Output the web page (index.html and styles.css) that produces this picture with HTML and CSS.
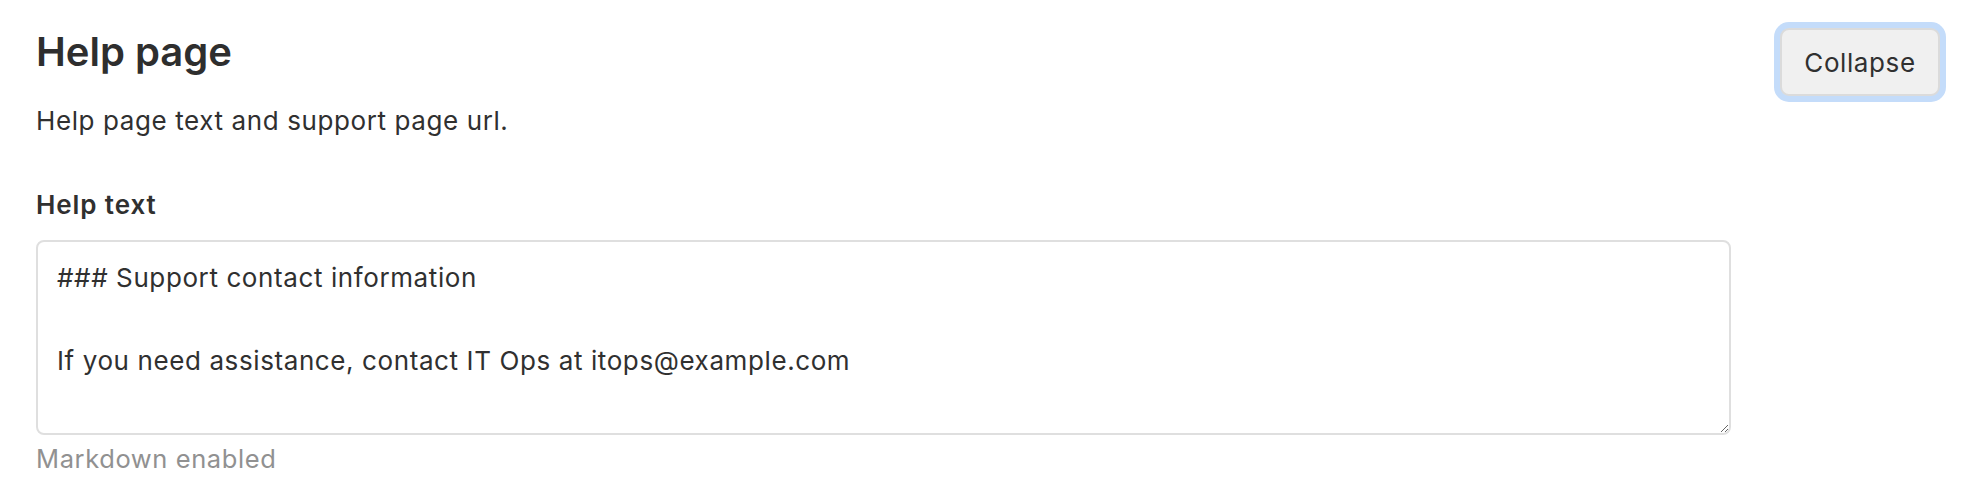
FILE: index.html
```html
<!DOCTYPE html>
<html>
<head>
<meta charset="utf-8">
<link rel="stylesheet" href="styles.css">
</head>
<body>
<section class="settings">
  <div class="settings-header">
    <div class="header-text">
      <h4 class="settings-title">Help page</h4>
      <p class="settings-desc">Help page text and support page url.</p>
    </div>
    <button class="btn-collapse" type="button">Collapse</button>
  </div>
  <div class="settings-content">
    <label class="field-label" for="help-text">Help text</label>
    <textarea id="help-text" class="field-textarea">### Support contact information

If you need assistance, contact IT Ops at itops@example.com</textarea>
    <div class="field-hint">Markdown enabled</div>
  </div>
</section>
</body>
</html>
```
FILE: styles.css
```css
html, body {
  margin: 0;
  padding: 0;
  background: #ffffff;
}
body {
  font-family: Inter, "Noto Sans", "Liberation Sans", sans-serif;
  color: #303030;
}
.settings {
  padding: 28px 16px 0 36px;
}
.settings-header {
  display: flex;
  justify-content: space-between;
  align-items: flex-start;
}
.settings-title {
  margin: 0;
  font-size: 40px;
  line-height: 48px;
  font-weight: 600;
  color: #2e2e2e;
}
.settings-desc {
  margin: 25px 0 0 0;
  font-size: 26px;
  line-height: 39px;
  letter-spacing: 0.6px;
}
.btn-collapse {
  margin-right: 6px;
  width: 160px;
  height: 68px;
  font-family: inherit;
  font-size: 26px;
  letter-spacing: 0.6px;
  color: #303030;
  background: #f0f0f0;
  border: 2px solid #dbdbdb;
  border-radius: 9px;
  box-shadow: 0 0 0 6px #c4dcfa;
  padding: 0;
}
.settings-content {
  width: 1695px;
  margin-top: 45px;
}
.field-label {
  display: block;
  font-size: 26px;
  line-height: 39px;
  font-weight: 600;
  letter-spacing: 0.9px;
}
.field-textarea {
  display: block;
  box-sizing: border-box;
  width: 100%;
  height: 195px;
  margin-top: 16px;
  padding: 15px 19px;
  font-family: inherit;
  font-size: 26px;
  line-height: 41.5px;
  letter-spacing: 0.6px;
  color: #303030;
  border: 2px solid #dfdfdf;
  border-radius: 8px;
  outline: none;
}
.field-hint {
  margin-top: 5px;
  font-size: 25.5px;
  line-height: 38px;
  letter-spacing: 0.6px;
  color: #919191;
}
```
